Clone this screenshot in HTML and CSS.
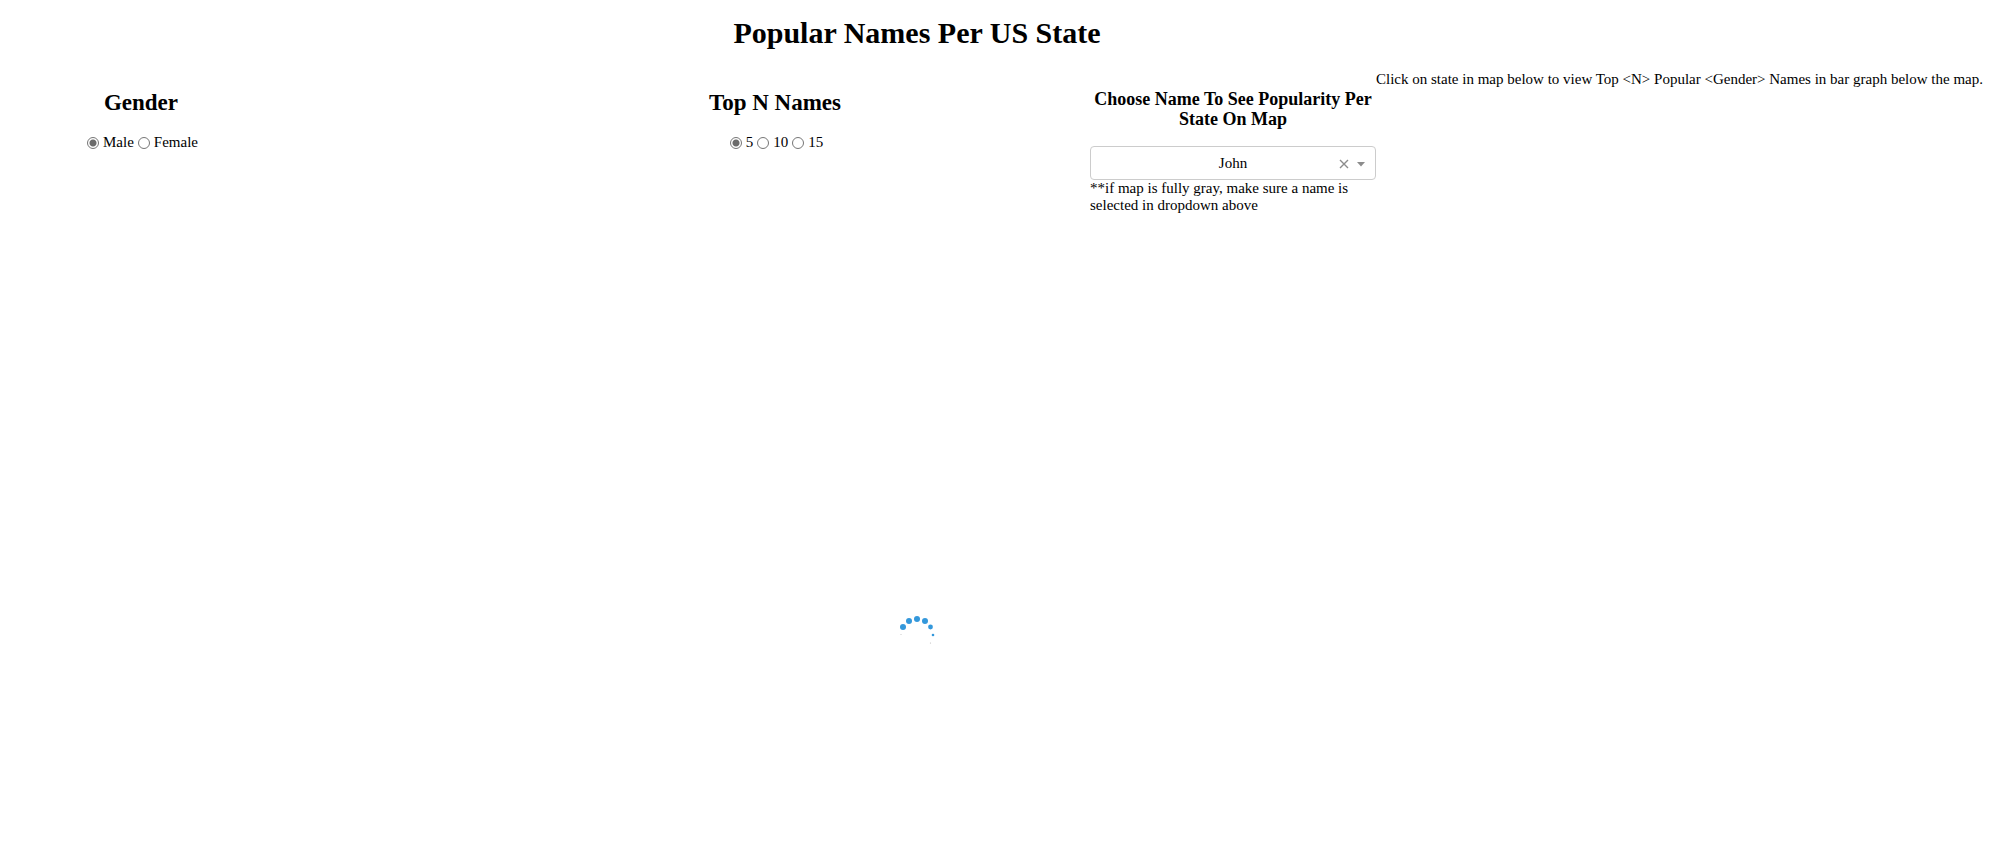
FILE: index.html
```html
<!DOCTYPE html>
<html lang="en">
<head>
<meta charset="utf-8">
<title>Popular Names Per US State</title>
<link rel="stylesheet" href="styles.css">
</head>
<body>
<main>
  <h1 class="title">Popular Names Per US State</h1>
  <div class="controls">
    <section class="group gender" role="radiogroup" aria-labelledby="gender-title">
      <h2 class="heading" id="gender-title">Gender</h2>
      <div class="options">
        <label class="option"><input type="radio" name="gender" value="M" checked>Male</label>
        <label class="option"><input type="radio" name="gender" value="F">Female</label>
      </div>
    </section>
    <section class="group top" role="radiogroup" aria-labelledby="top-title">
      <h2 class="heading" id="top-title">Top N Names</h2>
      <div class="options">
        <label class="option"><input type="radio" name="top" value="5" checked>5</label>
        <label class="option"><input type="radio" name="top" value="10">10</label>
        <label class="option"><input type="radio" name="top" value="15">15</label>
      </div>
    </section>
    <section class="picker">
      <h3 class="subheading"><label for="name">Choose Name To See Popularity Per State On Map</label></h3>
      <div class="dropdown">
        <select class="select" id="name"><option>John</option></select>
        <button class="clear" type="button" aria-label="Clear value"><svg width="10" height="10" viewBox="0 0 10 10"><path d="M1 1l8 8M9 1L1 9" stroke="#8c8c8c" stroke-width="1.4"/></svg></button>
        <svg class="arrow" width="8" height="5" viewBox="0 0 8 5"><path d="M0 0h8L4 4.5z" fill="#8c8c8c"/></svg>
      </div>
      <p class="note">**if map is fully gray, make sure a name is selected in dropdown above</p>
    </section>
    <p class="hint">Click on state in map below to view Top &lt;N&gt; Popular &lt;Gender&gt; Names in bar graph below the map.</p>
  </div>
  <div class="graph" role="status" aria-label="Loading">
    <svg width="40" height="40" viewBox="0 0 40 40" fill="#3498db">
      <circle cx="6" cy="15" r="3"/><circle cx="12" cy="9" r="3"/><circle cx="20" cy="7" r="3"/><circle cx="28" cy="9" r="3"/><circle cx="33.5" cy="15" r="2.4"/><circle cx="36" cy="23" r="1.3"/><circle cx="4" cy="22.5" r=".5" fill="#bbb"/><circle cx="33.5" cy="31" r=".6" fill="#bbb"/>
    </svg>
  </div>
</main>
</body>
</html>
```
FILE: styles.css
```css
body {
  margin: 0;
  background: #fff;
  color: #000;
  font: 15px/17px "Liberation Serif", "Times New Roman", serif;
}
.title {
  width: 91.7%;
  margin: 0;
  padding: 16px 0 21px;
  font-size: 30px;
  line-height: 34px;
  text-align: center;
}
.controls {
  display: grid;
  grid-template-columns: 14.1% 8.9% 31.5% 14.3% auto;
  align-items: start;
}
.group {
  text-align: center;
}
.top {
  grid-column: 3;
}
.heading {
  margin: 0;
  padding: 19px 0 18px;
  font-size: 23px;
  line-height: 26px;
}
.options {
  display: flex;
  justify-content: center;
  gap: 4px;
  padding-left: 3px;
}
.option {
  display: flex;
  align-items: center;
  gap: 4px;
}
.option input {
  appearance: none;
  box-sizing: border-box;
  width: 12px;
  height: 12px;
  margin: 0;
  border: 1px solid #767676;
  border-radius: 50%;
}
.option input:checked {
  background: radial-gradient(circle, #6b6b6b 3px, #fff 4px);
}
.subheading {
  margin: 0;
  padding: 18px 0 17px;
  font-size: 18px;
  line-height: 20px;
  text-align: center;
}
.dropdown {
  position: relative;
}
.select {
  appearance: none;
  display: block;
  box-sizing: border-box;
  width: 100%;
  height: 34px;
  padding: 0 16px;
  border: 1px solid #ccc;
  border-radius: 4px;
  background: #fff;
  color: #000;
  font: inherit;
  text-align: center;
  text-align-last: center;
}
.clear {
  position: absolute;
  top: 13px;
  right: 27px;
  display: flex;
  padding: 0;
  border: 0;
  background: none;
}
.arrow {
  position: absolute;
  top: 16px;
  right: 11px;
  pointer-events: none;
}
.note,
.hint {
  margin: 0;
}
.hint {
  white-space: nowrap;
}
.graph {
  display: flex;
  justify-content: center;
  align-items: center;
  width: 91.7%;
  height: 436px;
  padding-top: 200px;
}
```
